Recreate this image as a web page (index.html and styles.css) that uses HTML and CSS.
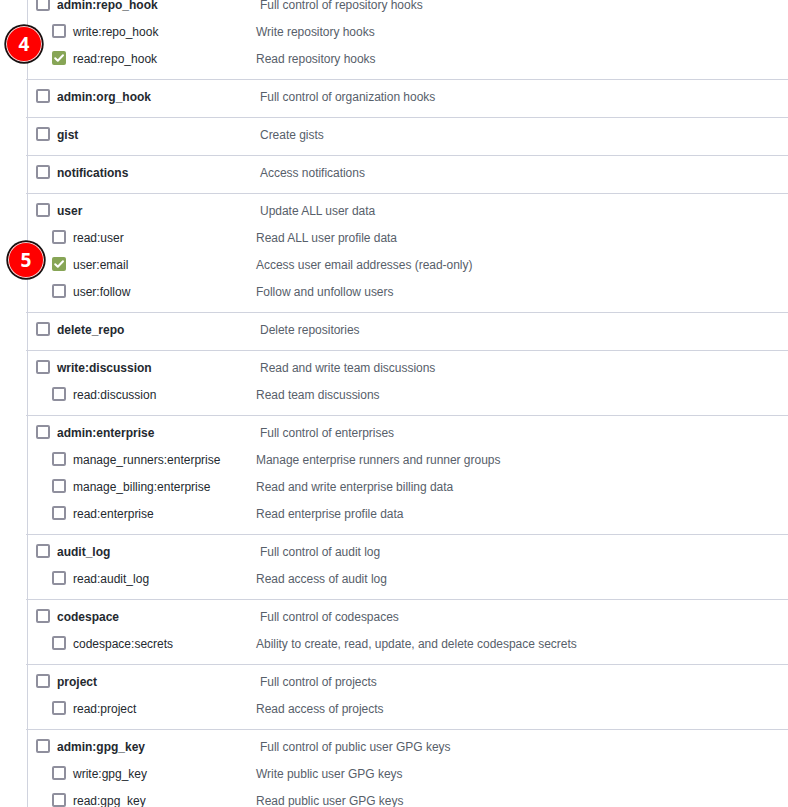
FILE: index.html
```
<!DOCTYPE html>
<html lang="en">
<head>
<meta charset="utf-8">
<title>Scopes</title>
<link rel="stylesheet" href="styles.css">
</head>
<body>
<main class="scopes" id="scopes"></main>
<div class="marker marker-four">4</div>
<div class="marker marker-five">5</div>
<script src="scopes.js"></script>
</body>
</html>
```
FILE: scopes.js
```
// Each group lists its parent scope first, then the child scopes.
const groups = [
  [["admin:repo_hook", "Full control of repository hooks"], ["write:repo_hook", "Write repository hooks"], ["read:repo_hook", "Read repository hooks", true]],
  [["admin:org_hook", "Full control of organization hooks"]],
  [["gist", "Create gists"]],
  [["notifications", "Access notifications"]],
  [["user", "Update ALL user data"], ["read:user", "Read ALL user profile data"], ["user:email", "Access user email addresses (read-only)", true], ["user:follow", "Follow and unfollow users"]],
  [["delete_repo", "Delete repositories"]],
  [["write:discussion", "Read and write team discussions"], ["read:discussion", "Read team discussions"]],
  [["admin:enterprise", "Full control of enterprises"], ["manage_runners:enterprise", "Manage enterprise runners and runner groups"], ["manage_billing:enterprise", "Read and write enterprise billing data"], ["read:enterprise", "Read enterprise profile data"]],
  [["audit_log", "Full control of audit log"], ["read:audit_log", "Read access of audit log"]],
  [["codespace", "Full control of codespaces"], ["codespace:secrets", "Ability to create, read, update, and delete codespace secrets"]],
  [["project", "Full control of projects"], ["read:project", "Read access of projects"]],
  [["admin:gpg_key", "Full control of public user GPG keys"], ["write:gpg_key", "Write public user GPG keys"], ["read:gpg_key", "Read public user GPG keys"]]
];
const tick = '<svg viewBox="0 0 14 14"><path d="M3.2 7.2 5.8 9.8 11 4.2"/></svg>';
document.getElementById("scopes").innerHTML = groups.map(group =>
  '<section class="group">' + group.map(([name, text, on], i) =>
    `<label class="row ${i ? "child" : "parent"}"><span class="box${on ? " checked" : ""}">${on ? tick : ""}</span><span class="name">${name}</span><span class="text">${text}</span></label>`
  ).join("") + "</section>").join("");
```
FILE: styles.css
```
* { box-sizing: border-box; }
html, body { height: 100%; }
body {
  margin: 0;
  position: relative;
  overflow: hidden;
  background: #fff;
  color: #24292f;
  font: 12px/29px "Liberation Sans", Arial, sans-serif;
}
.scopes {
  display: flow-root;
  height: 100%;
  margin-left: 27px;
  border-left: 1px solid #d0d3de;
}
.group {
  margin-left: -2px;
  padding: 3px 0 7px 10px;
  border-top: 1px solid #d0d3de;
}
.group:first-child {
  margin-top: -13px;
}
.row {
  display: flex;
  height: 27px;
  white-space: nowrap;
}
.child { padding-left: 16px; }
.box {
  width: 14px;
  height: 14px;
  margin: 6px 7px 0 0;
  border: 2px solid #8f8f9d;
  border-radius: 2px;
  background: #fff;
}
.box.checked {
  border: 0;
  background: #87a556;
}
.box svg {
  display: block;
  width: 14px;
  height: 14px;
  fill: none;
  stroke: #fff;
  stroke-width: 2;
  stroke-linecap: round;
  stroke-linejoin: round;
}
.name { width: 183px; }
.parent .name { width: 203px; font-weight: 700; }
.text { color: #57606a; letter-spacing: -0.025px; }
.marker {
  position: absolute;
  width: 38px;
  height: 38px;
  border: 1px solid #111;
  border-radius: 50%;
  background: #f00;
  box-shadow: inset 0 0 0 1px #e8dcdc, 0 0 0 0.7px #111;
  color: #fff;
  font: 700 19px/36px "Noto Sans", "Open Sans", sans-serif;
  text-align: center;
}
.marker-four { left: 5px; top: 25px; }
.marker-five { left: 7px; top: 241px; }
```
